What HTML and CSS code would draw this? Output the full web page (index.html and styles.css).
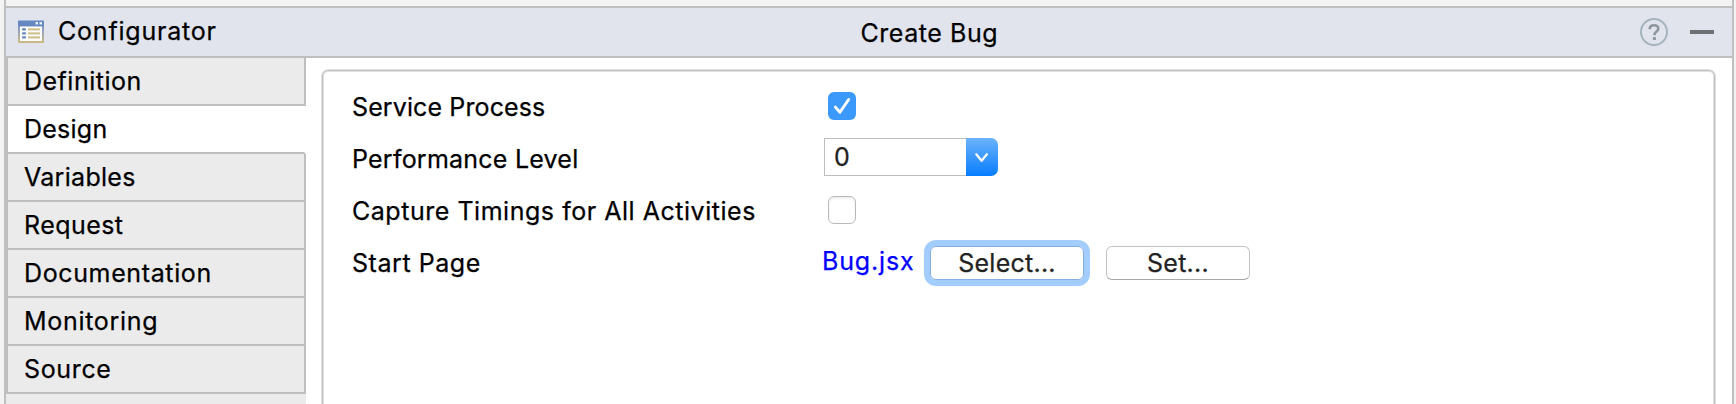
FILE: index.html
```html
<!DOCTYPE html>
<html lang="en">
<head>
<meta charset="utf-8">
<title>Configurator</title>
<link rel="stylesheet" href="styles.css">
</head>
<body>
<div class="window">
  <header class="header">
    <div class="header-left">
      <svg class="app-icon" width="28" height="26" viewBox="0 0 28 26">
        <defs>
          <linearGradient id="frame" x1="0" y1="0" x2="0" y2="1">
            <stop offset="0" stop-color="#5f83c2"/>
            <stop offset="0.4" stop-color="#8f9fc0"/>
            <stop offset="1" stop-color="#cdbb80"/>
          </linearGradient>
        </defs>
        <rect x="1" y="1.5" width="26" height="22.5" rx="1" fill="url(#frame)"/>
        <rect x="1.5" y="2" width="25" height="5" fill="#6486c1"/>
        <rect x="18.5" y="3" width="2.5" height="2.5" fill="#e8eefa"/>
        <rect x="22.5" y="3" width="2.5" height="2.5" fill="#e8eefa"/>
        <rect x="3" y="7.5" width="22" height="14.5" fill="#fbfbfa"/>
        <g fill="#6482bd">
          <rect x="5" y="9.3" width="4" height="2.3" rx="1"/>
          <rect x="5" y="13.2" width="4" height="2.3" rx="1"/>
          <rect x="5" y="17.2" width="4" height="2.3" rx="1"/>
        </g>
        <g fill="#cdbf8a">
          <rect x="11" y="9.4" width="12" height="2"/>
          <rect x="11" y="13.4" width="12" height="2"/>
          <rect x="11" y="17.4" width="12" height="2"/>
        </g>
      </svg>
      <span class="app-name">Configurator</span>
    </div>
    <h1 class="title">Create Bug</h1>
    <div class="header-right">
      <svg width="28" height="28" viewBox="0 0 28 28" fill="none">
        <circle cx="14" cy="14" r="13" stroke="#a6b4bd" stroke-width="2"/>
        <path d="M9.7 11.3C9.7 8.6 11.4 7.2 14 7.2C16.6 7.2 18.3 8.6 18.3 10.8C18.3 13.6 14.4 13.7 14.4 17.2" stroke="#8e979e" stroke-width="2.6"/>
        <rect x="12.9" y="19.1" width="3" height="2.9" fill="#8e979e"/>
      </svg>
      <span class="minimize"></span>
    </div>
  </header>
  <div class="body">
    <nav class="tabs">
      <div class="tab definition">Definition</div>
      <div class="tab design active">Design</div>
      <div class="tab variables">Variables</div>
      <div class="tab request">Request</div>
      <div class="tab documentation">Documentation</div>
      <div class="tab monitoring">Monitoring</div>
      <div class="tab source">Source</div>
    </nav>
    <main class="content">
      <div class="panel">
        <div class="row">
          <span class="label service">Service Process</span>
          <span class="check checked">
            <svg width="28" height="28" viewBox="0 0 28 28" fill="none"><path d="M7.4 15.1L11.9 20.3L20.7 7.5" stroke="#fff" stroke-width="2.9" stroke-linecap="round" stroke-linejoin="round"/></svg>
          </span>
        </div>
        <div class="row">
          <span class="label performance">Performance Level</span>
          <div class="combo">
            <span class="combo-value">0</span>
            <span class="combo-button">
              <svg width="32" height="38" viewBox="0 0 32 38" fill="none"><path d="M10.3 16.3L15.6 22.8L20.9 16.3" stroke="#fff" stroke-width="2.3" stroke-linecap="round" stroke-linejoin="round"/></svg>
            </span>
          </div>
        </div>
        <div class="row">
          <span class="label capture">Capture Timings for All Activities</span>
          <span class="check"></span>
        </div>
        <div class="row">
          <span class="label start">Start Page</span>
          <a class="link">Bug.jsx</a>
          <span class="button focused">Select...</span>
          <span class="button set">Set...</span>
        </div>
      </div>
    </main>
  </div>
</div>
</body>
</html>
```
FILE: styles.css
```css
* { box-sizing: border-box; }
body {
  margin: 0;
  height: 404px;
  overflow: hidden;
  background: #f3f3f3;
  color: #000;
  font: 25px/30px Inter, "Liberation Sans", sans-serif;
  -webkit-text-stroke: 0.25px currentColor;
}
.window {
  width: 1730px;
  height: 404px;
  margin-left: 4px;
  padding-top: 6px;
  border: solid #bfbfbf;
  border-width: 0 2px;
}
.header {
  display: grid;
  grid-template-columns: 1fr auto 1fr;
  align-items: center;
  height: 52px;
  border: solid #bfbfbf;
  border-width: 2px 0;
  background: #e1e4ed;
}
.header-left { display: flex; align-items: center; padding-left: 11px; }
.app-name { margin: 0 0 2px 13px; letter-spacing: 0.8px; }
.title { width: 255px; margin: 2px 0 0; padding-left: 119px; font: inherit; letter-spacing: 0.55px; white-space: nowrap; }
.header-right { display: flex; justify-content: flex-end; align-items: center; gap: 22px; padding-right: 18px; }
.minimize { width: 24px; height: 4px; background: #6f7073; }
.body { display: flex; height: 346px; background: #fff; }
.tabs { width: 300px; background: #ebebeb; }
.tab {
  height: 48px;
  padding: 8px 0 0 16px;
  border: solid #bfbfbf;
  border-width: 0 2px 2px;
}
.tab.active { border-right-color: #fff; background: #fff; }
.definition { letter-spacing: 0.5px; }
.source { letter-spacing: 0.65px; }
.design { letter-spacing: 0.25px; }
.variables { letter-spacing: 0.3px; }
.request { letter-spacing: 0.45px; }
.documentation { letter-spacing: 0.63px; }
.monitoring { letter-spacing: 0.7px; }
.content { flex: 1; padding: 11px 16px 0 15px; overflow: hidden; }
.panel {
  height: 350px;
  padding: 10px 0 0 30px;
  border: 1px solid #e2e2e2;
  border-radius: 7px;
  box-shadow: inset 0 0 0 1px #bfbfbf, inset 0 0 0 2px #e2e2e2;
}
.row { display: flex; align-items: center; height: 52px; }
.label { width: 471px; margin-top: 2px; }
.service { letter-spacing: 0.12px; }
.performance { letter-spacing: 0.23px; }
.capture { letter-spacing: 0.53px; }
.start { letter-spacing: 0.55px; }
.check {
  width: 28px;
  height: 28px;
  margin-left: 5px;
  border: 1px solid #b8b8b8;
  border-radius: 6px;
  box-shadow: inset 0 2px 2px #f0f0f0;
}
.check.checked { border: 0; background: #3b99fc; box-shadow: none; }
.check svg, .combo-button svg { display: block; }
.combo { display: flex; width: 174px; height: 38px; margin: 0 0 2px 1px; }
.combo-value { flex: 1; padding: 3px 0 0 9px; border: 1px solid #bdbdbd; border-right: 0; color: #222; }
.combo-button {
  width: 32px;
  border-radius: 0 7px 7px 0;
  background: linear-gradient(#6cb3fa, #077dff);
}
.link { width: 108px; margin: 0 0 2px -1px; color: #00f; letter-spacing: 0.85px; }
.button {
  width: 144px;
  height: 34px;
  margin-top: 2px;
  padding-top: 1px;
  border: 1px solid #c2c2c2;
  border-bottom-color: #a8a8a8;
  border-radius: 6px;
  text-align: center;
  color: #222;
  letter-spacing: 0.25px;
}
.button.focused { width: 154px; margin-right: 22px; border-color: #83aedf; box-shadow: 0 0 0 6px #a4cdff; }
```
